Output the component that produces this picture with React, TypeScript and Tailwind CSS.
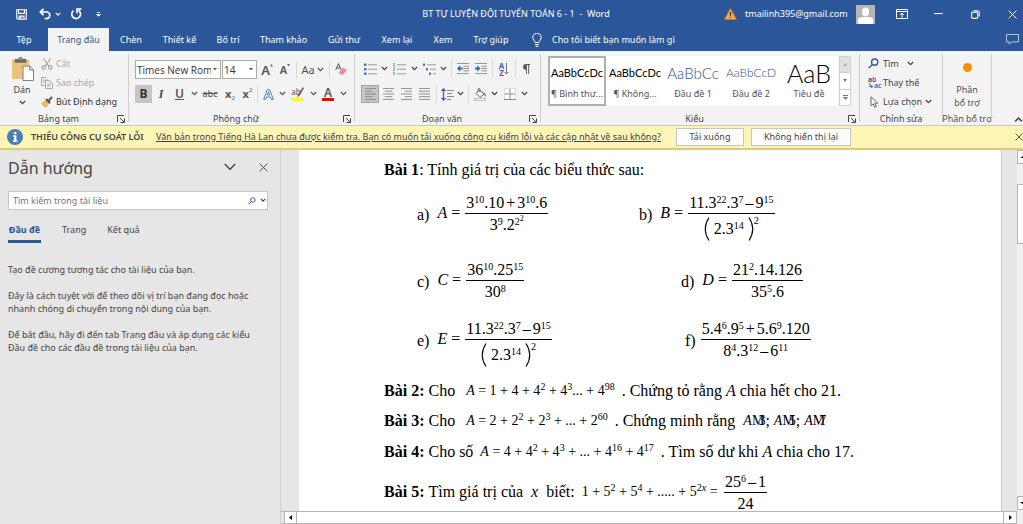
import type { ReactNode } from 'react'
import clsx from 'clsx'

const TABS = [
    { label: 'Tệp', width: 'w-12' },
    { label: 'Trang đầu', width: 'w-[61px]', active: true },
    { label: 'Chèn', width: 'w-11' },
    { label: 'Thiết kế', width: 'w-[53px]' },
    { label: 'Bố trí', width: 'w-11' },
    { label: 'Tham khảo', width: 'w-[67px]' },
    { label: 'Gửi thư', width: 'w-[54px]' },
    { label: 'Xem lại', width: 'w-[52px]' },
    { label: 'Xem', width: 'w-10' },
    { label: 'Trợ giúp', width: 'w-14' }
]

const STYLES = [
    { label: '¶ Bình thư...', sample: 'AaBbCcDc', look: 'text-[11px] text-black', active: true },
    { label: '¶ Không...', sample: 'AaBbCcDc', look: 'text-[11px] text-black' },
    { label: 'Đầu đề 1', sample: 'AaBbCc', look: 'text-[15px] text-[#2f5496] font-light' },
    { label: 'Đầu đề 2', sample: 'AaBbCcD', look: 'text-[12px] text-[#2f5496] font-light' },
    { label: 'Tiêu đề', sample: 'AaB', look: 'text-[25px] text-black font-light' }
]

/* ---------- small shared pieces ---------- */

const Chevron = ({ className = 'w-[7px]', thin }: { className?: string, thin?: boolean }) => (
    <svg viewBox="0 0 8 6" className={className} fill="none" stroke="currentColor" strokeWidth={thin ? 0.8 : 1.4}>
        <path d="M1 1.2 4 4.2 7 1.2" />
    </svg>
)

const Cross = ({ className = 'w-[9px]' }: { className?: string }) => (
    <svg viewBox="0 0 10 10" className={className} fill="none" stroke="currentColor" strokeWidth="1.1">
        <path d="M.7.7 9.3 9.3M9.3.7.7 9.3" />
    </svg>
)

const Magnifier = ({ className = 'w-[11px]' }: { className?: string }) => (
    <svg viewBox="0 0 12 12" className={className} fill="none" stroke="#2b579a" strokeWidth="1.4">
        <circle cx="7.3" cy="4.5" r="3.4" />
        <path d="M5 7 .8 11" />
    </svg>
)

const Tool = ({ label, className, children, active }: { label: string, className: string, children: ReactNode, active?: boolean }) => (
    <button
        aria-label={label}
        className={clsx('flex h-[18px] shrink-0 items-center justify-center', className, active && 'bg-[#c5c5c5]')}
    >
        {children}
    </button>
)

const More = ({ label, className = 'w-[8px]' }: { label: string, className?: string }) => (
    <Tool label={label} className={className}><Chevron className="w-[7px] shrink-0" /></Tool>
)

const Divider = ({ className }: { className: string }) => (
    <span className={clsx('flex h-[18px] shrink-0 justify-center', className)}>
        <span className="w-px bg-[#d8d8d8]" />
    </span>
)

const Group = ({ title, className, children, launcher }: { title: string, className: string, children: ReactNode, launcher?: boolean }) => (
    <section className={clsx('flex shrink-0 pt-[3px]', className)}>
        <div className="flex min-w-0 flex-1 flex-col">
            <div className="h-[59px] shrink-0">{children}</div>
            <div className="flex h-3 items-center justify-center">
                <span className={clsx('text-center whitespace-nowrap text-[#444]', launcher && 'flex-1')}>{title}</span>
                {launcher && (
                    <button aria-label={`Tùy chọn ${title}`} className="mr-[3px]">
                        <svg viewBox="0 0 8 8" className="w-2" fill="none" stroke="#444">
                            <path d="M.5 7V.5H7M3 3l4 4M7.5 3.5v4h-4" />
                        </svg>
                    </button>
                )}
            </div>
        </div>
        <span className="mb-[3px] w-px bg-[#cfcfcf]" />
    </section>
)

/* ---------- title bar and tabs ---------- */

const TitleBar = () => (
    <header className="flex h-7 items-center text-white">
        <div className="flex w-[250px] items-center pl-4">
            <button aria-label="Lưu">
                <svg viewBox="0 0 12 12" className="w-[11px]" fill="none" stroke="currentColor" strokeWidth="1.2">
                    <path d="M.8.8h10.4v10.4H2L.8 10zM2.8.8v4h6.4v-4M3.3 11V7.8h5.4V11" />
                    <path d="M4.5 8.5h1.6V11H4.5z" fill="currentColor" stroke="none" />
                </svg>
            </button>
            <button aria-label="Hoàn tác" className="ml-3">
                <svg viewBox="0 0 12 12" className="w-3" fill="none" stroke="currentColor" strokeWidth="1.7">
                    <path d="M4.5.8 1.3 4l3.2 3.2M1.5 4h6a3.2 3.2 0 0 1 0 6.6H5.6" />
                </svg>
            </button>
            <button aria-label="Danh sách hoàn tác" className="ml-1"><Chevron className="w-[6px]" /></button>
            <button aria-label="Lặp lại" className="ml-[9px]">
                <svg viewBox="0 0 12 12" className="w-3" fill="none" stroke="currentColor" strokeWidth="1.7">
                    <path d="M3.5 2.6A4.4 4.4 0 1 0 8.6 2.5M7 5.2V1.2h4.4" />
                </svg>
            </button>
            <button aria-label="Tùy chỉnh thanh công cụ" className="ml-[14px]">
                <svg viewBox="0 0 6 6" className="w-[5px]" fill="currentColor"><path d="M1 0h4v1H1zM0 2.4h6L3 5.6z" /></svg>
            </button>
        </div>
        <h1 className="flex-1 pl-[58px] text-center whitespace-pre">BT TỰ LUYỆN ĐỘI TUYỂN TOÁN 6 - 1  -  Word</h1>
        <div className="flex items-center">
            <svg viewBox="0 0 14 13" className="w-[13px]">
                <path d="M7 .6 13.6 12.4H.4z" fill="#f5a742" stroke="#d9762b" strokeWidth=".7" />
                <path d="M7 4.2v4.2M7 9.6v1.3" stroke="#333" strokeWidth="1.3" />
            </svg>
            <span className="ml-2 w-[104px] whitespace-nowrap">tmailinh395@gmail.com</span>
            <svg viewBox="0 0 19 19" className="ml-[7px] w-[19px]">
                <path d="M0 0h19v19H0z" fill="#b5b5b5" />
                <ellipse cx="9.5" cy="7" rx="3.6" ry="4.4" fill="#fff" />
                <path d="M1.8 19v-4.2q0-1.8 2.2-2.2l3-.7h5l3 .7q2.2.4 2.2 2.2V19z" fill="#fff" />
            </svg>
            <button aria-label="Tùy chọn hiển thị dải băng" className="ml-[21px]">
                <svg viewBox="0 0 12 10" className="w-3" fill="none" stroke="currentColor">
                    <path d="M.5.5h11v9H.5zM.5 2.5h11M6 8.5V4.3M4 6l2-2 2 2" />
                </svg>
            </button>
            <button aria-label="Thu nhỏ" className="ml-[26px]">
                <svg viewBox="0 0 10 2" className="w-[9px]"><path d="M0 0h10v1.2H0z" fill="currentColor" /></svg>
            </button>
            <button aria-label="Khôi phục" className="ml-7">
                <svg viewBox="0 0 10 10" className="w-[9px]" fill="none" stroke="currentColor" strokeWidth="1.2">
                    <rect x=".7" y="2.4" width="6.8" height="6.9" rx="1.3" />
                    <path d="M2.8.8h4.4q2 0 2 2v4.4" />
                </svg>
            </button>
            <button aria-label="Đóng" className="mr-[6px] ml-7"><Cross /></button>
        </div>
    </header>
)

const TabBar = () => (
    <nav className="flex h-[23px] items-stretch text-white">
        {TABS.map(({ label, width, active }) => (
            <button
                key={label}
                className={clsx('shrink-0 text-center whitespace-nowrap', width, active && 'bg-[#f3f3f3] text-[#2b579a]')}
            >
                {label}
            </button>
        ))}
        <button className="ml-[13px] flex items-center gap-[10px] whitespace-nowrap">
            <svg viewBox="0 0 10 14" className="w-[10px]" fill="none" stroke="currentColor">
                <path d="M3 9.5Q3 8.3 1.9 7.2A4.2 4.2 0 1 1 8.1 7.2Q7 8.3 7 9.5zM3 11.5h4M3.6 13.3h2.8" />
            </svg>
            Cho tôi biết bạn muốn làm gì
        </button>
        <button aria-label="Chú thích" className="mr-1 ml-auto">
            <svg viewBox="0 0 14 12" className="w-[13px]" fill="none" stroke="#c4d2e8">
                <path d="M.5.5h13v8H6L3.5 11V8.5h-3z" />
            </svg>
        </button>
    </nav>
)

/* ---------- ribbon ---------- */

const ClipboardGroup = () => (
    <Group title="Bảng tạm" className="w-[129px]" launcher>
        <div className="flex pt-[2px]">
            <button className="ml-2 flex w-7 flex-col items-center pt-px">
                <svg viewBox="0 0 24 25" className="w-[23px] shrink-0">
                    <path d="M1 3h18v20H1z" fill="#ecc37b" />
                    <path d="M4 2h3.500q.2-2 2.500-2t2.500 2H16v4H4z" fill="#6b6b6b" />
                    <circle cx="10" cy="2.200" r="1" fill="#ecc37b" />
                    <path d="M12.500 9.500h7l4 4v11h-11z" fill="#fff" stroke="#777" />
                    <path d="M19.500 9.500v4h4" fill="none" stroke="#777" />
                </svg>
                <span className="mt-[3px] leading-3">Dán</span>
                <Chevron className="mt-1 w-[7px]" />
            </button>
            <div className="ml-[5px] flex flex-col">
                <button disabled className="flex h-[19px] items-center gap-[3px] pb-1 text-[#a8a8a8]">
                    <svg viewBox="0 0 12 12" className="w-3" fill="none" stroke="currentColor" strokeWidth="1.2">
                        <path d="M2.5.5 8 8.3M9.5.5 4 8.3" />
                        <circle cx="2.700" cy="9.500" r="1.800" />
                        <circle cx="9.300" cy="9.500" r="1.800" />
                    </svg>
                    Cắt
                </button>
                <button disabled className="flex h-[19px] items-center gap-[3px] pb-1 text-[#a8a8a8]">
                    <svg viewBox="0 0 12 12" className="w-3" fill="none" stroke="currentColor">
                        <path d="M4 8.5H.5v-8h3.800L6.500 2.700V3M4.500 3.500h4l3 3v5h-7zM2 3h2M2 5h2M6 7h4M6 9h4" />
                    </svg>
                    Sao chép
                </button>
                <button className="flex h-[19px] items-center gap-[3px] pb-1 whitespace-nowrap text-[#333]">
                    <svg viewBox="0 0 12 12" className="w-3">
                        <path d="M0 7.500 4.500 4 8 7.500 5 12Q2 11 0 7.500z" fill="#ecb66a" />
                        <path d="m4.200 3.800 1.600-1.300 1.500 1L10.500.3l1.300 1.300L8.900 4.900l.8 1.400L8.400 8z" fill="#555" />
                    </svg>
                    Bút Định dạng
                </button>
            </div>
        </div>
    </Group>
)

const Combo = ({ label, value, className }: { label: string, value: string, className: string }) => (
    <div className={clsx('relative h-[19px] shrink-0', className)}>
        <select
            aria-label={label}
            className="h-full w-full appearance-none border border-[#ababab] bg-white pr-[9px] pl-px font-['Open_Sans',sans-serif] text-[10px] text-[#333]"
        >
            <option>{value}</option>
        </select>
        <svg viewBox="0 0 5 3" className="pointer-events-none absolute top-2 right-1 w-1" fill="#555"><path d="M0 0h5L2.5 3z" /></svg>
    </div>
)

const FontGroup = () => (
    <Group title="Phông chữ" className="w-[226px]" launcher>
        <div className="flex items-center gap-px pt-[6px] pl-[6px]">
            <Combo label="Phông chữ" value="Times New Roman" className="w-[86px]" />
            <Combo label="Cỡ chữ" value="14" className="w-[35px]" />
            <div className="flex">
                <Tool label="Tăng cỡ chữ" className="w-[18px]">
                    <span className="text-[13px] font-semibold text-[#555]">A</span>
                    <svg viewBox="0 0 4 3" className="mb-2 w-[3px]" fill="#2b6cb8"><path d="M0 3h4L2 0z" /></svg>
                </Tool>
                <Tool label="Giảm cỡ chữ" className="w-[18px]">
                    <span className="text-[11px] font-semibold text-[#555]">A</span>
                    <svg viewBox="0 0 4 3" className="mb-2 w-[3px]" fill="#2b6cb8"><path d="M0 0h4L2 3z" /></svg>
                </Tool>
                <Divider className="w-1" />
                <Tool label="Đổi chữ hoa/thường" className="w-[29px] gap-[2px] text-[11px] text-[#555]">Aa<Chevron /></Tool>
                <Divider className="w-1" />
                <Tool label="Xóa định dạng" className="w-[20px]">
                    <svg viewBox="0 0 12 13" className="w-[12px]">
                        <path d="M.7 7 3.500.7 6.300 7M1.700 5h3.600" fill="none" stroke="#555" />
                        <path d="m3.500 9.500 5-5L12 7.500l-5 5z" fill="#ec8f9c" />
                    </svg>
                </Tool>
            </div>
        </div>
        <div className="flex pt-[6px] pl-[6px] text-[#555]">
            <Tool label="Đậm" className="w-[17px]" active><b className="text-[12px] text-[#333]">B</b></Tool>
            <Tool label="Nghiêng" className="w-[18px]"><i className="font-['Liberation_Serif',serif] text-[13px] font-bold">I</i></Tool>
            <Tool label="Gạch dưới" className="w-[19px]"><u className="text-[12px] font-semibold">U</u></Tool>
            <More label="Kiểu gạch dưới" className="w-[10px]" />
            <Tool label="Gạch ngang chữ" className="w-[22px]"><s>abc</s></Tool>
            <Tool label="Chỉ số dưới" className="w-[18px]">
                <b className="text-[11px]">x</b><span className="mt-2 text-[6px] text-[#2b6cb8]">2</span>
            </Tool>
            <Tool label="Chỉ số trên" className="w-[17px]">
                <b className="text-[11px]">x</b><span className="mb-2 text-[6px] text-[#2b6cb8]">2</span>
            </Tool>
            <Divider className="w-[3px]" />
            <Tool label="Hiệu ứng văn bản" className="w-[19px]">
                <svg viewBox="0 0 12 12" className="w-[11px]" fill="none" stroke="#3f7fc4">
                    <path d="M.7 11.300 4.700.7h2.600l4 10.600H9L8.100 8.700H3.900L3 11.300zM4.700 6.600h2.600L6 3z" />
                </svg>
            </Tool>
            <More label="Chọn hiệu ứng" />
            <Tool label="Tô sáng" className="w-[23px]">
                <span className="flex w-[13px] flex-col items-center">
                    <span className="flex text-[8px] leading-[9px]">
                        ab
                        <svg viewBox="0 0 6 9" className="-ml-1 w-[7px]"><path d="M5 0 6 1 2.500 7 0 9 1 6z" fill="#666" /></svg>
                    </span>
                    <span className="h-[3px] w-[13px] bg-[#ffff00]" />
                </span>
            </Tool>
            <More label="Màu tô sáng" />
            <Tool label="Màu phông" className="w-[22px]">
                <span className="flex w-3 flex-col items-center">
                    <span className="text-[12px] leading-[10px] font-semibold">A</span>
                    <span className="h-[3px] w-3 bg-[#f00]" />
                </span>
            </Tool>
            <More label="Chọn màu phông" />
        </div>
    </Group>
)

const ListIcon = ({ kind }: { kind: 'bullet' | 'number' | 'level' }) => (
    <svg viewBox="0 0 13 12" className="w-[13px]">
        {kind === 'bullet' && <path d="M0 .5h2.500V3H0zM0 5h2.500v2.500H0zM0 9.500h2.500V12H0z" fill="#3f7fc4" />}
        {kind === 'number' && <path d="M1 0v3.500M1 4.500V8M1 9v3" stroke="#3f7fc4" strokeWidth="1.2" strokeDasharray="1.5 .6" />}
        {kind === 'level' && <path d="M0 .5h2V3H0zM3 5h2v2.500H3zM6 9.500h2V12H6z" fill="#3f7fc4" />}
        <path
            d={kind === 'level' ? 'M4 1.800h9M7 6.200h6M10 10.800h3' : 'M4 1.800h9M4 6.200h9M4 10.800h9'}
            stroke="#999"
        />
    </svg>
)

const IndentIcon = ({ right }: { right?: boolean }) => (
    <svg viewBox="0 0 13 12" className="w-[12px]" fill="none" stroke="#888">
        <path d="M0 .5h13M7 3.500h6M7 6h6M7 8.500h6M0 11.500h13" />
        <path
            d={right ? 'M0 5h2.500V2.500L6 6 2.500 9.500V7H0z' : 'M6 5H3.500V2.500L0 6l3.500 3.500V7H6z'}
            fill="#2b6cb8"
            stroke="none"
        />
    </svg>
)

const AlignIcon = ({ d }: { d: string }) => (
    <svg viewBox="0 0 12 13" className="w-[11px]" stroke="#888"><path d={d} /></svg>
)

const ParagraphGroup = () => (
    <Group title="Đoạn văn" className="w-[186px]" launcher>
        <div className="flex pt-[6px] pl-[5px]">
            <Tool label="Dấu đầu dòng" className="w-[20px]"><ListIcon kind="bullet" /></Tool>
            <More label="Kiểu dấu đầu dòng" className="w-[9px]" />
            <Tool label="Đánh số" className="w-[21px]"><ListIcon kind="number" /></Tool>
            <More label="Kiểu đánh số" className="w-[9px]" />
            <Tool label="Danh sách đa mức" className="w-[20px]"><ListIcon kind="level" /></Tool>
            <More label="Kiểu đa mức" className="w-[9px]" />
            <Divider className="w-[6px]" />
            <Tool label="Giảm thụt lề" className="w-[18px]"><IndentIcon /></Tool>
            <Tool label="Tăng thụt lề" className="w-[18px]"><IndentIcon right /></Tool>
            <Divider className="w-[5px]" />
            <Tool label="Sắp xếp" className="w-[18px]">
                <span className="flex flex-col text-[8px] leading-[7px] font-bold">
                    <span className="text-[#2b6cb8]">A</span><span className="text-[#8a45a8]">Z</span>
                </span>
                <svg viewBox="0 0 5 12" className="w-[5px]" fill="none" stroke="#777"><path d="M2.500 0v11M.5 9l2 2 2-2" /></svg>
            </Tool>
            <Divider className="w-1" />
            <Tool label="Hiện dấu đoạn" className="w-[17px]">
                <svg viewBox="0 0 9 12" className="w-[8px]" fill="#555"><path d="M9 0v1H8v11H7V1H5.500v11h-1V6.500a3.200 3.200 0 0 1 0-6.500z" /></svg>
            </Tool>
        </div>
        <div className="flex pt-[7px] pl-[6px]">
            <Tool label="Căn trái" className="w-[18px] border border-[#a5a5a5]" active>
                <AlignIcon d="M0 .5h12M0 3.500h8M0 6.500h12M0 9.500h8M0 12.500h12" />
            </Tool>
            <Tool label="Căn giữa" className="w-[19px]"><AlignIcon d="M0 .5h12M2 3.500h8M0 6.500h12M2 9.500h8M0 12.500h12" /></Tool>
            <Tool label="Căn phải" className="w-[17px]"><AlignIcon d="M0 .5h12M4 3.500h8M0 6.500h12M4 9.500h8M0 12.500h12" /></Tool>
            <Tool label="Căn đều" className="w-[19px]"><AlignIcon d="M0 .5h12M0 3.500h12M0 6.500h12M0 9.500h12M0 12.500h12" /></Tool>
            <Divider className="w-[5px]" />
            <Tool label="Giãn cách dòng" className="w-[17px]">
                <svg viewBox="0 0 13 13" className="w-[13px]" fill="none">
                    <path d="M2.500 1v11M.5 3l2-2 2 2M.5 10l2 2 2-2" stroke="#2b6cb8" strokeWidth="1.3" />
                    <path d="M6 2.500h7M6 5.500h5M6 8.500h7M6 11.500h4" stroke="#888" />
                </svg>
            </Tool>
            <More label="Chọn giãn cách" />
            <Divider className="w-2" />
            <Tool label="Tô bóng" className="w-[17px]">
                <svg viewBox="0 0 13 13" className="w-[13px]" fill="none">
                    <path d="m5.500 2 4.500 4-4 3.500L2 5.500zM4 4V1.500Q4 .5 5 .5t1 1V4" stroke="#666" />
                    <path d="M9.500 4Q12 5 11.700 9 9.800 7.500 10.500 6z" fill="#2b6cb8" />
                    <path d="M.5 10.500h11v2H.5z" fill="#fff" stroke="#aaa" strokeWidth=".8" />
                </svg>
            </Tool>
            <More label="Màu tô bóng" className="w-[10px]" />
            <Tool label="Viền" className="w-[21px]">
                <svg viewBox="0 0 12 12" className="w-[12px]" fill="#fff" stroke="#bbb">
                    <path d="M.5.5h11v11H.5z" strokeDasharray="1 1" />
                    <path d="M6 1v10M1 6h10M0 11.500h12" stroke="#888" />
                </svg>
            </Tool>
            <More label="Chọn viền" className="w-[9px]" />
        </div>
    </Group>
)

const StylesGroup = () => (
    <Group title="Kiểu" className="min-w-0 flex-1" launcher>
        <div className="flex h-[52px] pt-[2px] pl-[7px]">
            {STYLES.map(({ label, sample, look, active }) => (
                <button
                    key={label}
                    className={clsx('flex w-[58px] flex-col items-center border-2 bg-white', active ? 'border-[#b0b0b0]' : 'border-white')}
                >
                    <span className={clsx("flex h-[30px] shrink-0 items-center font-[Lato,sans-serif] leading-[30px]", look)}>{sample}</span>
                    <span className="leading-3 whitespace-nowrap text-[#555]">{label}</span>
                </button>
            ))}
            <div className="ml-px flex w-3 flex-col border border-[#d0d0d0] bg-white text-[#777]">
                <button aria-label="Hàng trước" className="flex flex-1 items-center justify-center bg-[#e1e1e1] text-[#aaa]">
                    <svg viewBox="0 0 4 3" className="w-1" fill="currentColor"><path d="M0 3h4L2 0z" /></svg>
                </button>
                <button aria-label="Hàng sau" className="flex flex-1 items-center justify-center border-y border-[#d0d0d0]">
                    <svg viewBox="0 0 4 3" className="w-1" fill="currentColor"><path d="M0 0h4L2 3z" /></svg>
                </button>
                <button aria-label="Xem thêm kiểu" className="flex flex-1 items-center justify-center">
                    <svg viewBox="0 0 5 5" className="w-[5px]" fill="currentColor"><path d="M0 0h5v1H0zM0 2h5L2.500 5z" /></svg>
                </button>
            </div>
        </div>
    </Group>
)

const EditingGroup = () => (
    <Group title="Chỉnh sửa" className="w-[83px]">
        <div className="flex flex-col pt-[2px] pl-2 whitespace-nowrap text-[#444]">
            <button className="flex h-[19px] items-center gap-1 pb-1"><Magnifier />Tìm<Chevron className="ml-1 w-[7px]" /></button>
            <button className="flex h-[19px] items-center gap-[3px] pb-1">
                <span className="flex w-3 flex-col text-left text-[7px] leading-[6px] font-semibold">
                    <span>a<span className="text-[#8a45a8]">b</span></span>
                    <span className="text-[#2b6cb8]">↳ac</span>
                </span>
                Thay thế
            </button>
            <button className="flex h-[19px] items-center gap-[3px] pb-1">
                <svg viewBox="0 0 12 12" className="w-3" fill="#fff" stroke="#666"><path d="M3 .8v9l2.200-2 1.500 3.500 1.600-.7L6.800 7.200h3z" /></svg>
                Lựa chọn<Chevron />
            </button>
        </div>
    </Group>
)

const Ribbon = () => (
    <div className="flex h-[75px] shrink-0 border-b border-[#c9c9c0] bg-[#f3f3f3] text-[#444]">
        <ClipboardGroup />
        <FontGroup />
        <ParagraphGroup />
        <StylesGroup />
        <EditingGroup />
        <Group title="Phần bổ trợ" className="w-[49px] font-['Open_Sans',sans-serif]">
            <button className="flex w-full flex-col items-center pt-[9px] leading-[13px]">
                <span className="mb-[11px] h-[9px] w-[9px] rounded-full bg-[#ff8c00]" />
                Phần<br />bổ trợ
            </button>
        </Group>
        <button aria-label="Thu gọn dải băng" className="flex w-[31px] items-end justify-end pb-[2px]">
            <Chevron className="w-[9px] rotate-180" />
        </button>
    </div>
)

const MessageBar = () => (
    <div role="status" className="flex h-6 shrink-0 items-center border-b-2 border-[#dccb7c] bg-[#fcf5b5] pl-[7px] whitespace-nowrap text-[#444]">
        <svg viewBox="0 0 16 16" className="w-4">
            <circle cx="8" cy="8" r="8" fill="#4a7ebb" />
            <path d="M6.800 3h2.600v2H6.800zM6.200 6.300h3.200v5.200h1V13H6v-1.500h1V7.700h-.8z" fill="#fff" />
        </svg>
        <span className="ml-2 w-[117px] font-semibold">THIẾU CÔNG CỤ SOÁT LỖI</span>
        <a href="#proofing" className="ml-2 w-[512px] underline">
            Văn bản trong Tiếng Hà Lan chưa được kiểm tra. Bạn có muốn tải xuống công cụ kiểm lỗi và các cập nhật về sau không?
        </a>
        <button className="ml-2 h-[18px] w-[68px] border border-[#c6c6c6] bg-[#fdfdfd]">Tải xuống</button>
        <button className="ml-[7px] h-[18px] w-[100px] border border-[#c6c6c6] bg-[#fdfdfd]">Không hiển thị lại</button>
        <button aria-label="Đóng thông báo" className="ml-auto"><Cross className="w-2" /></button>
    </div>
)

/* ---------- navigation pane ---------- */

const NavigationPane = () => (
    <aside className="w-[281px] shrink-0 border-r border-[#cfcfcf] px-2 text-[#444]">
        <div className="flex h-[34px] items-center">
            <h2 className="flex-1 pt-px text-[16px] text-[#444]">Dẫn hướng</h2>
            <button aria-label="Tùy chọn ngăn"><Chevron thin className="w-[14px]" /></button>
            <button aria-label="Đóng ngăn" className="mr-1 ml-[22px]"><Cross /></button>
        </div>
        <div className="mt-[7px] mr-1 flex h-[19px] items-center border border-[#c6c6c6] bg-white pr-px text-[#444]">
            <input
                aria-label="Tìm kiếm trong tài liệu"
                placeholder="Tìm kiếm trong tài liệu"
                className="min-w-0 flex-1 pl-1 placeholder:text-[#777]"
            />
            <button aria-label="Tìm kiếm" className="mr-1"><Magnifier className="w-2" /></button>
            <button aria-label="Tùy chọn tìm kiếm"><Chevron className="w-[6px]" /></button>
        </div>
        <div className="mt-[14px] flex gap-[21px]">
            <button className="w-[33px] border-b-[3px] border-[#2b579a] pb-1 font-bold whitespace-nowrap text-[#2b579a]">Đầu đề</button>
            <button className="pb-[7px]">Trang</button>
            <button className="pb-[7px]">Kết quả</button>
        </div>
        <div className="mt-5 flex flex-col gap-[13px] leading-[13px] whitespace-nowrap">
            <p>Tạo đề cương tương tác cho tài liệu của bạn.</p>
            <p>Đây là cách tuyệt vời để theo dõi vị trí bạn đang đọc hoặc<br />nhanh chóng di chuyển trong nội dung của bạn.</p>
            <p>Để bắt đầu, hãy đi đến tab Trang đầu và áp dụng các kiểu<br />Đầu đề cho các đầu đề trong tài liệu của bạn.</p>
        </div>
    </aside>
)

/* ---------- document ---------- */

const Sup = ({ children }: { children: ReactNode }) => <sup className="text-[10px]">{children}</sup>

const Op = ({ children }: { children: ReactNode }) => <span className="mx-[2px]">{children}</span>

const Frac = ({ top, bottom }: { top: ReactNode, bottom: ReactNode }) => (
    <span className="inline-flex flex-col items-center">
        <span className="h-[22px] border-b border-black px-px leading-[21px]">{top}</span>
        <span className="flex h-[21px] items-center pt-[2px]">{bottom}</span>
    </span>
)

const Item = ({ mark, name, className, children }: { mark: string, name?: string, className?: string, children: ReactNode }) => (
    <div className={clsx('flex items-center whitespace-nowrap', className)}>
        <span className="pt-1">{mark})</span>
        {name && <span className="ml-2"><i>{name}</i> =</span>}
        <span className="ml-[5px] flex">{children}</span>
    </div>
)

const Paren = ({ left }: { left?: boolean }) => (
    <svg viewBox="0 0 6 24" className="h-6 w-[6px]" fill="none" stroke="#000" strokeWidth="1.1">
        <path d={left ? 'M5 .5Q-2.5 12 5 23.5' : 'M1 .5Q8.5 12 1 23.5'} />
    </svg>
)

const PowerFraction = () => (
    <Frac
        top={<>11.3<Sup>22</Sup>.3<Sup>7</Sup><Op>–</Op>9<Sup>15</Sup></>}
        bottom={
            <span className="flex items-center pt-2">
                <Paren left />
                <span className="mx-1">2.3<Sup>14</Sup></span>
                <Paren />
                <span className="mb-4 text-[10px] leading-3">2</span>
            </span>
        }
    />
)

// the divisibility sign comes out as an M that the digit runs into
const Divisible = ({ by }: { by: string }) => (
    <span className="text-[14px]"><i>A</i>M<span className="-ml-[6px]">{by}</span></span>
)

const Problem = ({ no, children, className }: { no: number, children: ReactNode, className: string }) => (
    <p className={clsx('flex items-center whitespace-pre', className)}>
        <b className="pr-1">Bài {no}:</b>{children}
    </p>
)

const Formula = ({ children }: { children: ReactNode }) => <span className="mx-[3px] text-[14px]">{children}</span>

const Document = () => (
    <article className="min-w-0 flex-1 overflow-hidden border-r border-[#c9c9c9] bg-white pl-[85px] font-['Liberation_Serif','Times_New_Roman',serif] text-[16px] leading-5 text-black">
        <p className="pt-[10px]"><b>Bài 1</b>: Tính giá trị của các biểu thức sau:</p>
        <div className="grid grid-cols-[222px_1fr] pb-3 pl-[33px]">
            <Item mark="a" name="A" className="h-[66px]">
                <Frac
                    top={<>3<Sup>10</Sup>.10<Op>+</Op>3<Sup>10</Sup>.6</>}
                    bottom={<span>3<Sup>9</Sup>.2<Sup>2<sup className="text-[8px]">2</sup></Sup></span>}
                />
            </Item>
            <Item mark="b" name="B" className="h-[66px]"><PowerFraction /></Item>
            <Item mark="c" name="C" className="h-[68px]">
                <Frac top={<>36<Sup>10</Sup>.25<Sup>15</Sup></>} bottom={<span>30<Sup>8</Sup></span>} />
            </Item>
            <Item mark="d" name="D" className="h-[68px] pl-[42px]">
                <Frac top={<>21<Sup>2</Sup>.14.126</>} bottom={<span>35<Sup>5</Sup>.6</span>} />
            </Item>
            <Item mark="e" name="E" className="h-[50px]"><PowerFraction /></Item>
            <Item mark="f" className="h-[50px] pl-[46px]">
                <Frac
                    top={<>5.4<Sup>6</Sup>.9<Sup>5</Sup><Op>+</Op>5.6<Sup>9</Sup>.120</>}
                    bottom={<span>8<Sup>4</Sup>.3<Sup>12</Sup><Op>–</Op>6<Sup>11</Sup></span>}
                />
            </Item>
        </div>
        <Problem no={2} className="h-[30px]">
            Cho  <Formula><i>A</i> = 1 + 4 + 4<Sup>2</Sup> + 4<Sup>3</Sup>... + 4<Sup>98</Sup></Formula> . Chứng tỏ rằng <i>A</i> chia hết cho 21.
        </Problem>
        <Problem no={3} className="h-[30px]">
            Cho  <Formula><i>A</i> = 2 + 2<Sup>2</Sup> + 2<Sup>3</Sup> + ... + 2<Sup>60</Sup></Formula> . Chứng minh rằng  <Divisible by="3" />; <Divisible by="5" />; <Divisible by="7" />
        </Problem>
        <Problem no={4} className="h-[31px]">
            Cho số <Formula><i>A</i> = 4 + 4<Sup>2</Sup> + 4<Sup>3</Sup> + ... + 4<Sup>16</Sup> + 4<Sup>17</Sup></Formula> . Tìm số dư khi <i>A</i> chia cho 17.
        </Problem>
        <Problem no={5} className="h-[50px]">
            Tìm giá trị của  <i>x</i>  biết: <Formula>1 + 5<Sup>2</Sup> + 5<Sup>4</Sup> + ..... + 5<Sup>2<i>x</i></Sup> = </Formula>
            <Frac top={<>25<Sup>6</Sup><Op>–</Op>1</>} bottom="24" />
        </Problem>
    </article>
)

const HorizontalScroll = () => (
    <div className="flex h-[13px] shrink-0 border-y border-[#b5b5b5] bg-[#e6e6e6] pl-[3px]">
        <button aria-label="Cuộn trái" className="flex w-[13px] items-center justify-center border-x border-[#b5b5b5] bg-white">
            <svg viewBox="0 0 3 5" className="w-[3px]"><path d="M3 0v5L0 2.500z" /></svg>
        </button>
        <div className="flex-1 bg-white" />
        <button aria-label="Cuộn phải" className="flex w-[14px] items-center justify-center border-x border-[#b5b5b5] bg-white">
            <svg viewBox="0 0 3 5" className="w-[3px]"><path d="M0 0v5l3-2.500z" /></svg>
        </button>
    </div>
)

const VerticalScroll = () => (
    <div className="flex w-[6px] shrink-0 flex-col bg-[#f0f0f0] pb-[14px]">
        <button aria-label="Cuộn lên" className="flex h-[14px] items-center justify-end border border-r-0 border-[#b5b5b5] bg-white">
            <svg viewBox="0 0 4 3" className="w-[3px]"><path d="M0 3h4V0z" /></svg>
        </button>
        <div className="mt-5 h-[60px] border border-r-0 border-[#b5b5b5] bg-white" />
        <button aria-label="Cuộn xuống" className="mt-auto flex h-[14px] items-center justify-end border border-r-0 border-[#b5b5b5] bg-white">
            <svg viewBox="0 0 4 3" className="w-[3px]"><path d="M0 0h4v3z" /></svg>
        </button>
    </div>
)

const App = () => (
    <div className="flex h-screen flex-col overflow-hidden bg-[#e6e6e6] font-['Noto_Sans','Open_Sans',sans-serif] text-[9px] leading-3">
        <div className="shrink-0 bg-[#2b579a]">
            <TitleBar />
            <TabBar />
        </div>
        <Ribbon />
        <MessageBar />
        <main className="flex min-h-0 flex-1">
            <NavigationPane />
            <div className="flex min-w-0 flex-1 flex-col">
                <div className="flex min-h-0 flex-1 pr-[15px] pl-[18px]"><Document /></div>
                <HorizontalScroll />
            </div>
            <VerticalScroll />
        </main>
    </div>
)

export default App
